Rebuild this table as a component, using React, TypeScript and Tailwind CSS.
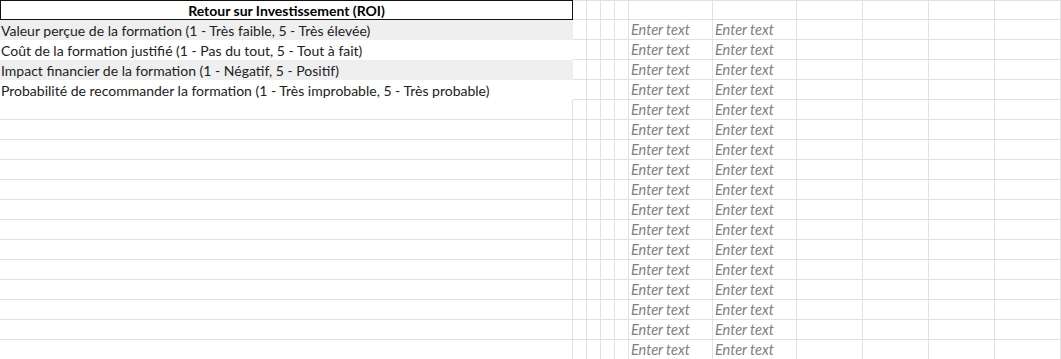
import React from 'react';

const questions = [
  'Valeur perçue de la formation (1 - Très faible, 5 - Très élevée)',
  'Coût de la formation justifié (1 - Pas du tout, 5 - Tout à fait)',
  'Impact financier de la formation (1 - Négatif, 5 - Positif)',
  'Probabilité de recommander la formation (1 - Très improbable, 5 - Très probable)',
];

const ROWS = 18;
const line = 'border-[#e1e1e1]';

function RightCells({ row }: { row: number }) {
  const top = row === 0 ? 'border-t' : '';
  const small = [0, 1, 2, 3];
  const wide = [0, 1, 2, 3];
  return (
    <>
      {small.map((i) => (
        <div key={'s' + i} className={`border-r border-b ${top} ${line}`} />
      ))}
      {[0, 1].map((i) => (
        <div
          key={'e' + i}
          className={`border-r border-b ${top} ${line} flex items-center pl-[2px] pt-[2px] italic text-[14.5px] text-[#808080] overflow-hidden whitespace-nowrap`}
        >
          {row > 0 ? 'Enter text' : ''}
        </div>
      ))}
      {wide.map((i) => (
        <div key={'w' + i} className={`border-r border-b ${top} ${line}`} />
      ))}
    </>
  );
}

function LeftCell({ row }: { row: number }) {
  if (row === 0) {
    return (
      <div className="border border-[#111] flex items-center justify-center pt-[1px] font-bold text-black">
        Retour sur Investissement (ROI)
      </div>
    );
  }
  if (row <= 4) {
    const bg = row % 2 === 1 ? 'bg-[#efefef]' : 'bg-white';
    return (
      <div className={`${bg} flex items-center pl-[1px] pt-[1px] text-[#222] whitespace-nowrap overflow-hidden`}>
        {questions[row - 1]}
      </div>
    );
  }
  return <div className={`border-r border-b ${line}`} />;
}

export default function App() {
  return (
    <div
      className="w-[1061px] h-[359px] overflow-hidden bg-white text-[14px] leading-none"
      style={{ fontFamily: 'Lato, "Liberation Sans", sans-serif' }}
    >
      <div className="grid grid-cols-[573px_14px_14px_14px_14px_84px_84px_66px_66px_66px_66px] auto-rows-[20px]">
        {Array.from({ length: ROWS }).map((_, r) => (
          <React.Fragment key={r}>
            <LeftCell row={r} />
            <RightCells row={r} />
          </React.Fragment>
        ))}
      </div>
    </div>
  );
}
